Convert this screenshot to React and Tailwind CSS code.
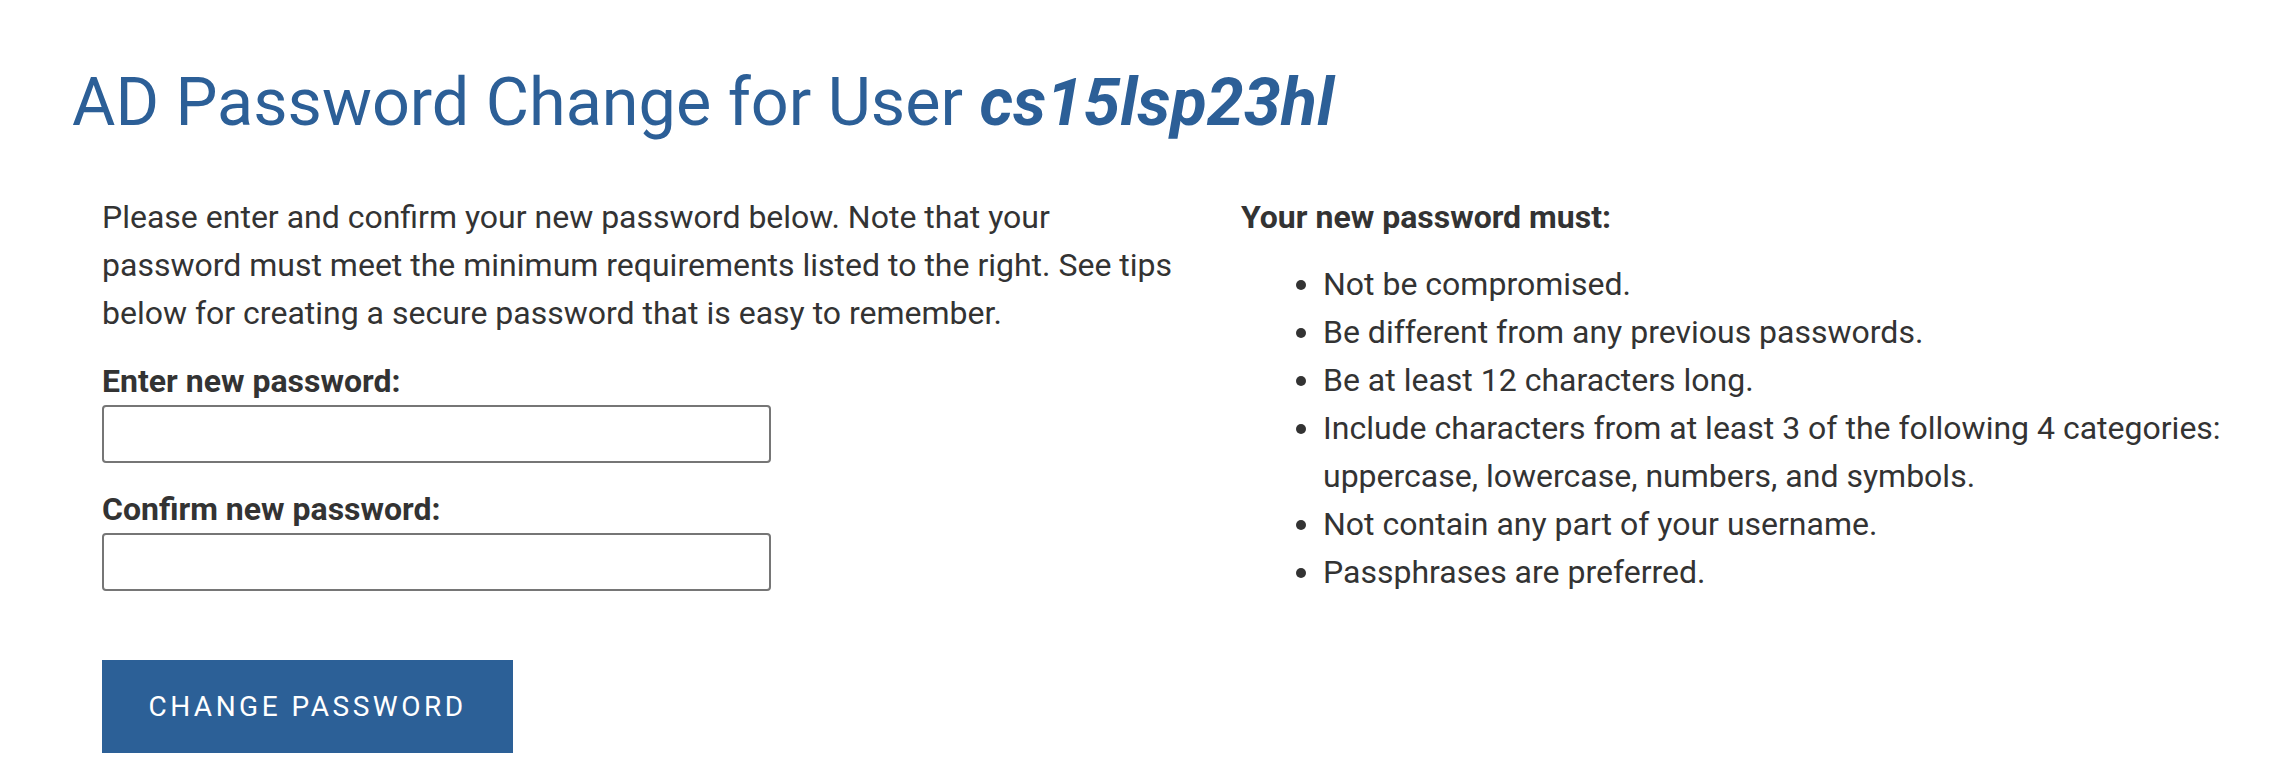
import React from "react";

const rules = [
  "Not be compromised.",
  "Be different from any previous passwords.",
  "Be at least 12 characters long.",
  <>
    Include characters from at least 3 of the following 4 categories:
    <br />
    uppercase, lowercase, numbers, and symbols.
  </>,
  "Not contain any part of your username.",
  "Passphrases are preferred.",
];

const App = () => {
  return (
    <div className="min-h-screen bg-white font-[Roboto,sans-serif] text-[#333333]">
      <div className="pl-[72px] pt-[63px]">
        <h1 className="text-[66.5px] leading-[79px] font-normal text-[#2c5f97]">
          AD Password Change for User <em className="font-bold">cs15lsp23hl</em>
        </h1>

        <div className="mt-[51px] flex">
          {/* left column: form */}
          <div className="w-[1139px] pl-[30px]">
            <p className="text-[32px] leading-[48px]">
              Please enter and confirm your new password below. Note that your
              <br />
              password must meet the minimum requirements listed to the right. See tips
              <br />
              below for creating a secure password that is easy to remember.
            </p>

            <form onSubmit={(e) => e.preventDefault()}>
              <label className="mt-[21px] block text-[32px] leading-[47px] font-bold">
                Enter new password:
              </label>
              <input
                type="password"
                className="block h-[58px] w-[669px] rounded-[4px] border-2 border-[#767676] bg-white px-3 text-[32px]"
              />

              <label className="mt-[23px] block text-[32px] leading-[47px] font-bold">
                Confirm new password:
              </label>
              <input
                type="password"
                className="block h-[58px] w-[669px] rounded-[4px] border-2 border-[#767676] bg-white px-3 text-[32px]"
              />

              <button
                type="submit"
                className="mt-[69px] flex h-[93px] w-[411px] items-center justify-center bg-[#2c6097] text-[28px] tracking-[3.5px] text-white uppercase"
              >
                Change Password
              </button>
            </form>
          </div>

          {/* right column: requirements */}
          <div className="pl-[30px]">
            <h2 className="text-[32px] leading-[48px] font-bold">Your new password must:</h2>
            <ul className="mt-[19px] list-disc pl-[82px] text-[32px] leading-[48px]">
              {rules.map((rule, i) => (
                <li key={i}>{rule}</li>
              ))}
            </ul>
          </div>
        </div>
      </div>
    </div>
  );
};

export default App;
